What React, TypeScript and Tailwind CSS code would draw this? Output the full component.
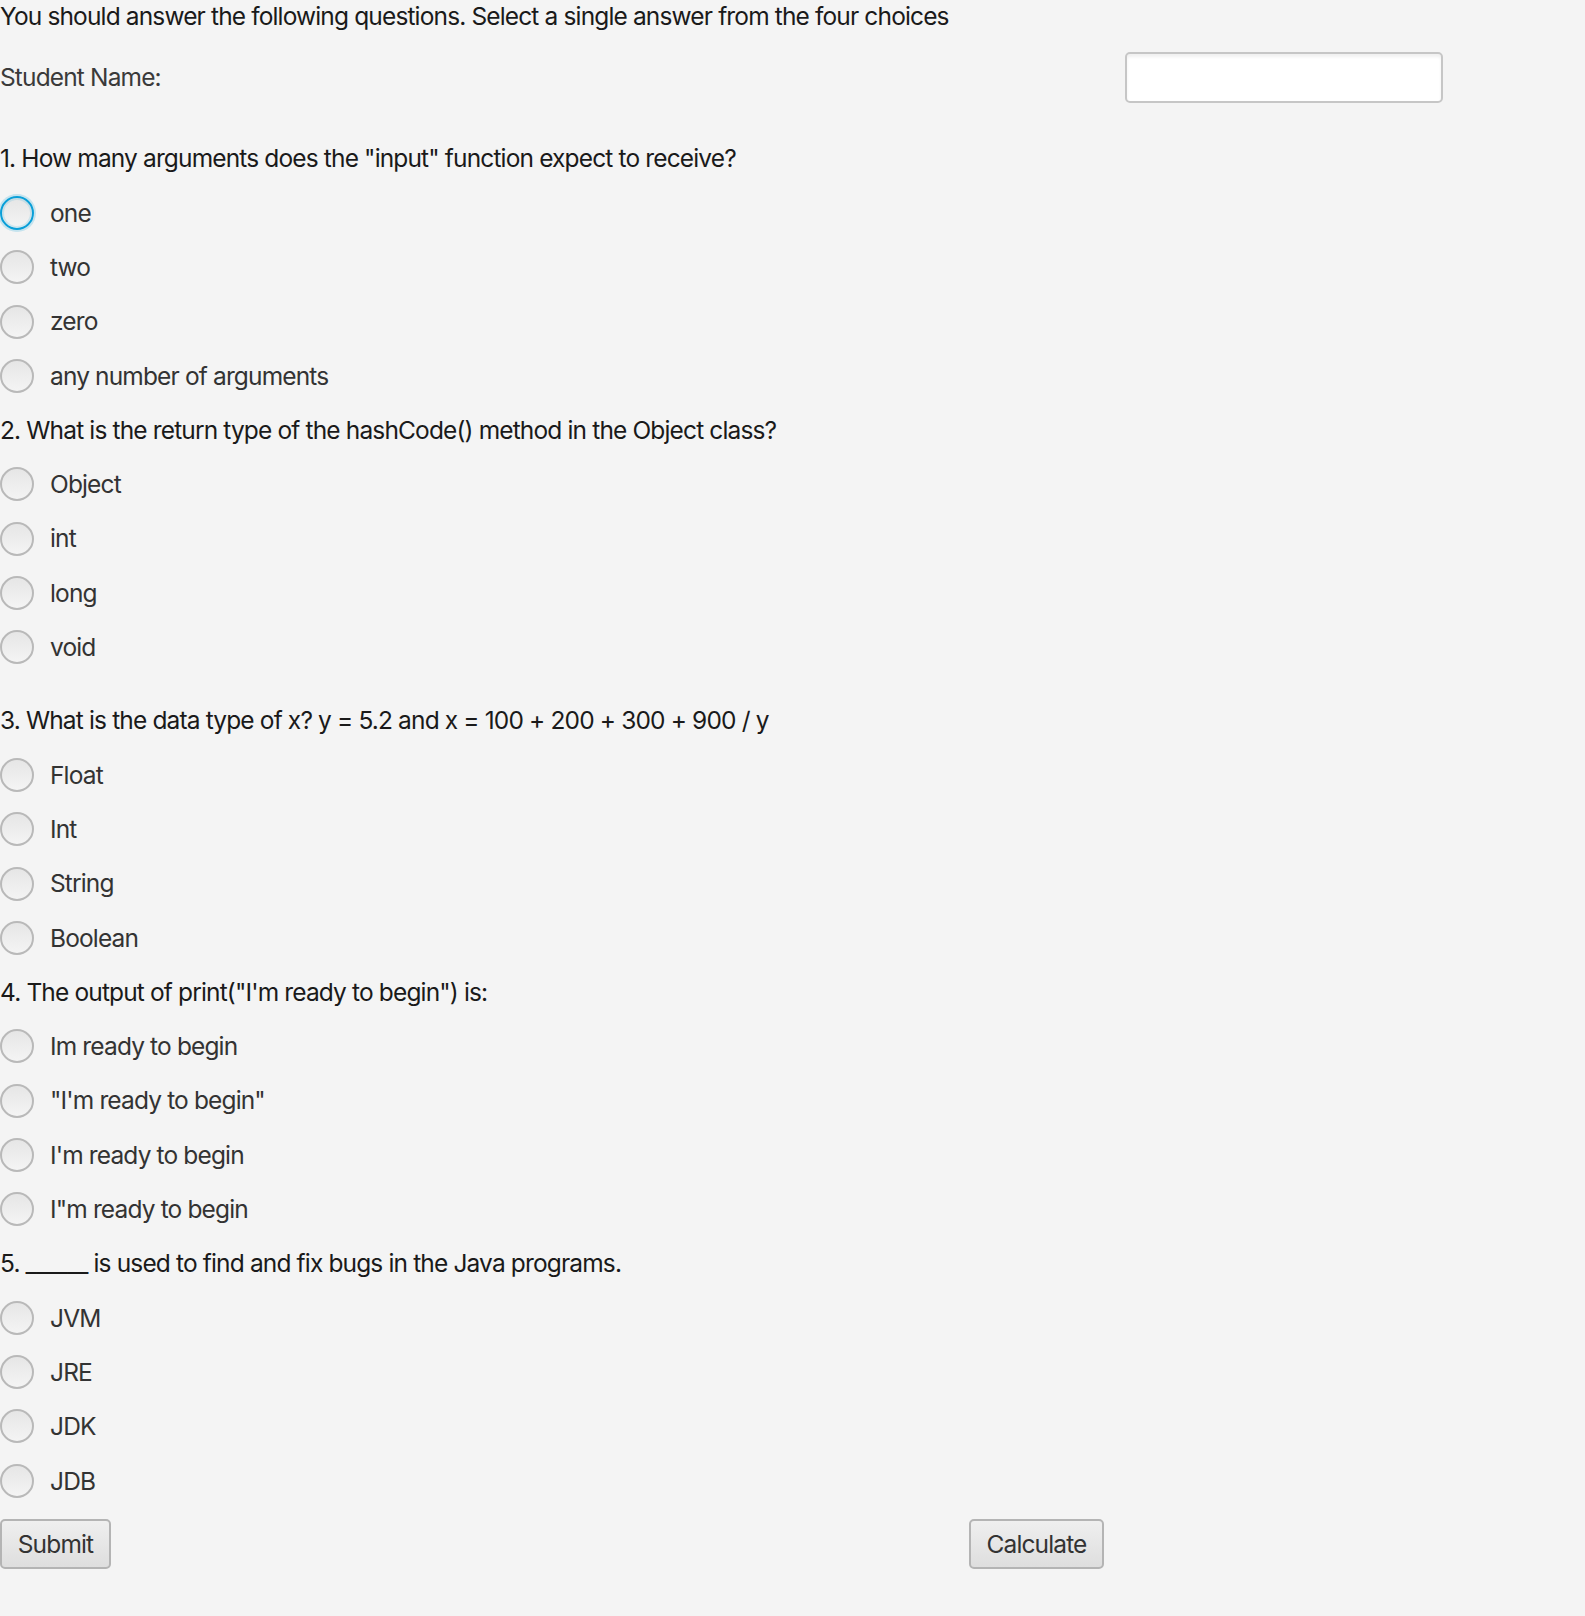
import { useState } from 'react';

type Question = {
  title: string;
  options: string[];
  extraGap?: boolean;
};

const questions: Question[] = [
  {
    title: '1. How many arguments does the "input" function expect to receive?',
    options: ['one', 'two', 'zero', 'any number of arguments'],
  },
  {
    title: '2. What is the return type of the hashCode() method in the Object class?',
    options: ['Object', 'int', 'long', 'void'],
    extraGap: true,
  },
  {
    title: '3. What is the data type of x? y = 5.2 and x = 100 + 200 + 300 + 900 / y',
    options: ['Float', 'Int', 'String', 'Boolean'],
  },
  {
    title: '4. The output of print("I\'m ready to begin") is:',
    options: ['Im ready to begin', '"I\'m ready to begin"', "I'm ready to begin", 'I"m ready to begin'],
  },
  {
    title: '5. ______ is used to find and fix bugs in the Java programs.',
    options: ['JVM', 'JRE', 'JDK', 'JDB'],
  },
];

const Radio = ({ label, focused }: { label: string; focused?: boolean }) => (
  <label className="h-[54.3px] flex items-center cursor-pointer">
    <span
      className={`w-[34px] h-[34px] rounded-full border-2 bg-gradient-to-b from-[#e6e6e6] to-[#f4f4f4] shrink-0 ${
        focused ? 'border-[#0a9fd8] shadow-[0_0_0_2px_rgba(10,159,216,0.2),inset_0_0_0_2px_rgba(10,159,216,0.15)]' : 'border-[#b9b9b9]'
      }`}
    />
    <span className="ml-[16px] text-[#333333]">{label}</span>
  </label>
);

const App = () => {
  const [name, setName] = useState('');

  return (
    <div className="min-h-[1616px] w-[1585px] bg-[#f4f4f4] text-[#1a1a1a] text-[24.5px] tracking-[-0.035em] font-['Inter',sans-serif] leading-none">
      <div className="h-[33px] flex items-center">
        You should answer the following questions. Select a single answer from the four choices
      </div>

      <div className="h-[88px] flex items-center">
        <span className="w-[1125px] text-[#3a3a3a]">Student Name:</span>
        <input
          value={name}
          onChange={(e) => setName(e.target.value)}
          className="w-[318px] h-[51px] bg-white border-2 border-[#c6c6c6] rounded-[5px] shadow-[inset_0_3px_3px_rgba(0,0,0,0.06)] outline-none px-3"
        />
      </div>

      <div className="h-[10.5px]" />

      {questions.map((q, i) => (
        <div key={i}>
          <div className="h-[54.3px] flex items-center">{q.title}</div>
          {q.options.map((opt, j) => (
            <Radio key={j} label={opt} focused={i === 0 && j === 0} />
          ))}
          {q.extraGap && <div className="h-[19px]" />}
        </div>
      ))}

      <div className="flex items-center mt-[11px]">
        <button className="w-[111px] h-[50px] rounded-[5px] border-2 border-[#b4b4b4] bg-gradient-to-b from-[#efefef] to-[#dedede] text-[#333333]">
          Submit
        </button>
        <button className="ml-[858px] w-[135px] h-[50px] rounded-[5px] border-2 border-[#b4b4b4] bg-gradient-to-b from-[#efefef] to-[#dedede] text-[#333333]">
          Calculate
        </button>
      </div>
    </div>
  );
};

export default App;
